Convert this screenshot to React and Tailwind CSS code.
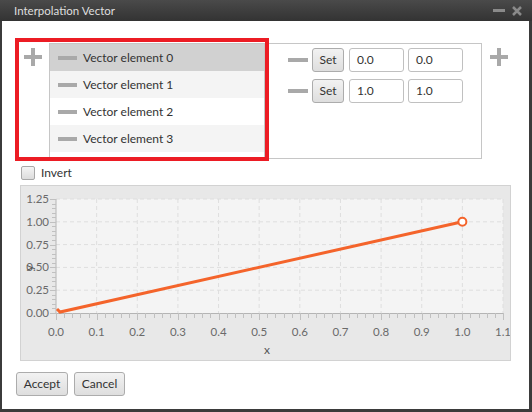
import React from "react";

const font = { fontFamily: 'Lato, "Open Sans", sans-serif' };

function Plus({ className = "" }) {
  return (
    <svg width="20" height="20" viewBox="0 0 20 20" className={className}>
      <rect x="8" y="1" width="4" height="18" fill="#a9a9a9" />
      <rect x="1" y="8" width="18" height="4" fill="#a9a9a9" />
    </svg>
  );
}

function Minus({ w = 19 }) {
  return <div className="h-[4px] bg-[#a9a9a9]" style={{ width: w }} />;
}

function Chart() {
  const L = 35, R = 482, T = 13, B = 127;
  const sx = (v) => L + (v / 1.1) * (R - L);
  const sy = (v) => B - (v / 1.25) * (B - T);
  const xs = [0, 0.1, 0.2, 0.3, 0.4, 0.5, 0.6, 0.7, 0.8, 0.9, 1.0, 1.1];
  const ys = [0, 0.25, 0.5, 0.75, 1.0, 1.25];
  const xMinor = [];
  for (let i = 0; i <= 55; i++) xMinor.push(i * 0.02);
  const yMinor = [];
  for (let i = 0; i <= 25; i++) yMinor.push(i * 0.05);
  return (
    <svg width="491" height="176" viewBox="0 0 491 176" style={font}>
      <rect x={L} y={T} width={R - L} height={B - T} fill="#f4f4f4" />
      {xs.slice(1).map((v) => (
        <line key={"gx" + v} x1={sx(v)} x2={sx(v)} y1={T} y2={B} stroke="#dedede" strokeDasharray="4 3" />
      ))}
      {ys.slice(1).map((v) => (
        <line key={"gy" + v} x1={L} x2={R} y1={sy(v)} y2={sy(v)} stroke="#dedede" strokeDasharray="4 3" />
      ))}
      <line x1={L} x2={L} y1={T} y2={B} stroke="#b4b4b4" />
      <line x1={L} x2={R} y1={B + 0.5} y2={B + 0.5} stroke="#b4b4b4" />
      {yMinor.map((v, i) => (
        <line key={"my" + i} x1={i % 5 === 0 ? 29 : 31} x2={L} y1={Math.round(sy(v)) + 0.5} y2={Math.round(sy(v)) + 0.5} stroke="#c0c0c0" />
      ))}
      {xMinor.map((v, i) => (
        <line key={"mx" + i} x1={Math.round(sx(v)) + 0.5} x2={Math.round(sx(v)) + 0.5} y1={B} y2={i % 5 === 0 ? B + 7 : B + 5} stroke="#c0c0c0" />
      ))}
      {ys.map((v) => (
        <text key={"ly" + v} x={28} y={sy(v) + 4} textAnchor="end" fontSize="11.5" fill="#6a6a6a">
          {v.toFixed(2)}
        </text>
      ))}
      {xs.map((v) => (
        <text key={"lx" + v} x={sx(v)} y={150} textAnchor="middle" fontSize="11.5" fill="#6a6a6a">
          {v.toFixed(1)}
        </text>
      ))}
      <text x={246} y={168} textAnchor="middle" fontSize="12" fill="#555">x</text>
      <text x={0} y={0} transform="translate(12,82) rotate(-90)" textAnchor="middle" fontSize="12" fill="#555">y</text>
      <polyline
        points={`${L + 1},${B - 4} ${L + 4},${B - 1} ${sx(1)},${sy(1)}`}
        fill="none"
        stroke="#f4642b"
        strokeWidth="3"
      />
      <circle cx={sx(1)} cy={sy(1)} r="4" fill="#fff" stroke="#f4642b" strokeWidth="2" />
    </svg>
  );
}

function Btn({ children, className = "" }) {
  return (
    <div
      className={
        "flex items-center justify-center rounded-[3px] border border-[#acacac] bg-gradient-to-b from-[#f2f2f2] to-[#dedede] text-[12px] text-[#333] " +
        className
      }
    >
      {children}
    </div>
  );
}

function Field({ value }) {
  return (
    <div className="w-[55px] h-[24px] rounded-[3px] border border-[#c0c0c0] bg-white flex items-center pl-[7px] text-[12px] text-[#333]">
      {value}
    </div>
  );
}

export default function App() {
  const rows = [
    { label: "Vector element 0", bg: "bg-[#d1d1d1]" },
    { label: "Vector element 1", bg: "bg-[#f4f4f4]" },
    { label: "Vector element 2", bg: "bg-white" },
    { label: "Vector element 3", bg: "bg-[#f4f4f4]" },
  ];
  return (
    <div className="w-[532px] h-[412px] bg-[#3b3b3b] flex flex-col" style={font}>
      <div className="h-[21px] flex items-center justify-between bg-gradient-to-b from-[#4a4a4a] to-[#333] pl-[14px] pr-[10px]">
        <span className="text-[11.5px] text-[#dedede] leading-none">Interpolation Vector</span>
        <div className="flex items-center gap-[7px]">
          <div className="w-[12px] h-[3px] bg-[#8a8a8a]" />
          <svg width="10" height="10" viewBox="0 0 10 10">
            <path d="M1 1 L9 9 M9 1 L1 9" stroke="#8a8a8a" strokeWidth="2.5" />
          </svg>
        </div>
      </div>
      <div className="relative flex-1 bg-white ml-[2px] mr-[3px] mb-[3px] flex flex-col">
        {/* top section */}
        <div className="flex items-start pt-[22px] pl-[21px]">
          <Plus className="mt-[4px]" />
          <div className="ml-[6px] w-[433px] h-[116px] border border-[#c6c6c6] flex">
            <div className="w-[215px] h-full border-r border-[#c6c6c6] flex flex-col">
              {rows.map((r) => (
                <div key={r.label} className={"h-[27px] flex items-center pl-[8px] " + r.bg}>
                  <Minus />
                  <span className="ml-[6px] text-[12px] text-[#333]">{r.label}</span>
                </div>
              ))}
            </div>
            <div className="flex flex-col gap-[7px] pt-[4px] pl-[23px]">
              {[["0.0", "0.0"], ["1.0", "1.0"]].map((v, i) => (
                <div key={i} className="flex items-center">
                  <Minus w={20} />
                  <Btn className="ml-[4px] w-[32px] h-[24px]">Set</Btn>
                  <div className="ml-[5px]"><Field value={v[0]} /></div>
                  <div className="ml-[4px]"><Field value={v[1]} /></div>
                </div>
              ))}
            </div>
          </div>
          <Plus className="ml-[7px] mt-[4px]" />
        </div>
        {/* invert */}
        <div className="flex items-center pl-[19px] mt-[6px] h-[16px]">
          <div className="w-[14px] h-[14px] rounded-[2px] border border-[#a8a8a8] bg-gradient-to-b from-[#f4f4f4] to-[#dcdcdc]" />
          <span className="ml-[6px] text-[12px] text-[#333]">Invert</span>
        </div>
        {/* chart */}
        <div className="ml-[18px] mt-[4px] w-[491px] h-[176px] bg-[#e8e8e8] border border-[#d2d2d2] box-border overflow-hidden">
          <Chart />
        </div>
        {/* buttons */}
        <div className="flex gap-[6px] pl-[14px] mt-[11px]">
          <Btn className="w-[52px] h-[24px]">Accept</Btn>
          <Btn className="w-[51px] h-[24px]">Cancel</Btn>
        </div>
        {/* red highlight annotation */}
        <div className="absolute left-[13px] top-[17px] w-[254px] h-[123px] border-4 border-[#ec1c24] pointer-events-none" />
      </div>
    </div>
  );
}
